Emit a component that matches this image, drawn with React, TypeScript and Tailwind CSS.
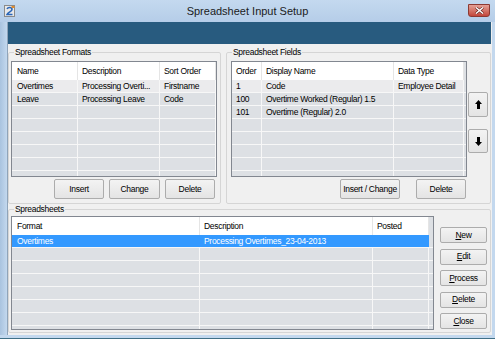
import React from "react";

type Col = { label: string; w: string; pl?: string };

function Btn({ children, className = "" }: { children: React.ReactNode; className?: string }) {
  return (
    <button className={`flex shrink-0 items-center justify-center rounded-[2px] border border-[#acacac] bg-linear-to-b from-[#f3f3f3] to-[#e4e4e4] text-black ${className}`}>
      {children}
    </button>
  );
}

function Acc({ k, rest }: { k: string; rest: string }) {
  return (
    <span>
      <span className="underline underline-offset-[1px]">{k}</span>
      {rest}
    </span>
  );
}

function ListView({
  cols,
  rows,
  filler = "",
  body = 8,
  light = -1,
  selected = -1,
  className = "",
}: {
  cols: Col[];
  rows: string[][];
  filler?: string;
  body?: number;
  light?: number;
  selected?: number;
  className?: string;
}) {
  return (
    <div className={`flex shrink-0 flex-col overflow-hidden border border-[#828790] bg-[#dde0e4] ${className}`}>
      <div className="flex h-[18px] shrink-0">
        {cols.map((c, i) => (
          <div
            key={i}
            className={`flex shrink-0 items-center border-r border-[#e5e5e5] bg-white ${c.w} ${c.pl ?? "pl-[4px]"}`}
          >
            {c.label}
          </div>
        ))}
        {filler && <div className={`shrink-0 ${filler}`} />}
      </div>
      {Array.from({ length: body }).map((_, r) => {
        const row = rows[r] ?? [];
        const sel = r === selected;
        const bg = sel ? "bg-[#3399ff] text-white" : r === light ? "bg-[#ebebed]" : "bg-[#dde0e4]";
        return (
          <div key={r} className="flex h-[13px] shrink-0 border-b border-[#f7f7f7]">
            {cols.map((c, i) => (
              <div
                key={i}
                className={`flex shrink-0 items-center overflow-hidden whitespace-nowrap border-r ${sel ? "border-[#3399ff]" : "border-[#f7f7f7]"} ${bg} ${c.w} ${c.pl ?? "pl-[4px]"}`}
              >
                {row[i] ?? ""}
              </div>
            ))}
            {filler && <div className={`shrink-0 ${filler}`} />}
          </div>
        );
      })}
    </div>
  );
}

function Arrow({ down = false }: { down?: boolean }) {
  return (
    <svg width="7" height="9" viewBox="0 0 7 9" className={down ? "rotate-180" : ""}>
      <path d="M3.5 0 L7 4 L5 4 L5 9 L2 9 L2 4 L0 4 Z" fill="#000" />
    </svg>
  );
}

export default function App() {
  return (
    <div className="flex h-[339px] w-[495px] flex-col overflow-hidden bg-[#b9d1ea] font-['Liberation_Sans',Arial,sans-serif] text-[8.5px] leading-[11px] tracking-[-0.3px] text-black">
      {/* title bar */}
      <div className="relative flex h-[22px] shrink-0 items-center justify-center bg-linear-to-b from-[#c4d9ef] to-[#b5cde8]">
        <svg width="12" height="12" viewBox="0 0 12 12" className="absolute left-[4px] top-[5px]">
          <rect x="0.5" y="0.5" width="10" height="11" fill="#e8e8e8" stroke="#8a8a8a" />
          <path d="M3 4 C4 2 8 2 8 4.5 C8 6.5 4 7 3 9.5 L8.5 9.5" fill="none" stroke="#2a66b8" strokeWidth="1.6" />
          <rect x="7.5" y="1" width="3" height="2" fill="#e08a2c" />
        </svg>
        <span className="text-[11px] tracking-normal text-[#1b1b1b]">Spreadsheet Input Setup</span>
        <div className="absolute left-[468px] top-[4px] flex h-[13px] w-[22px] items-center justify-center rounded-b-[3px] border border-[#8c3a33] bg-linear-to-b from-[#e3a096] to-[#c2453a]">
          <svg width="9" height="7" viewBox="0 0 9 7">
            <path d="M1 0.5 L8 6.5 M8 0.5 L1 6.5" stroke="#5a1a14" strokeWidth="2.6" />
            <path d="M1 0.5 L8 6.5 M8 0.5 L1 6.5" stroke="#fff" strokeWidth="1.5" />
          </svg>
        </div>
      </div>

      <div className="flex min-h-0 flex-1">
        {/* left frame */}
        <div className="w-[8px] shrink-0 border-r border-[#8fa4ba] bg-linear-to-r from-[#a9c3df] to-[#c3d8ee]" />
        <div className="flex h-[313px] w-[484px] shrink-0 flex-col bg-[#f0f0f0] pr-[1px]">
          <div className="h-[22px] shrink-0 bg-[#285b7f]" />

          {/* top row */}
          <div className="mt-[3px] flex gap-[5px]">
            <fieldset className="flex w-[213px] shrink-0 flex-col rounded-[2px] border border-[#d5d5d5] pb-[4px] pl-[2px] pr-[3px] pt-[3px]">
              <legend className="ml-[3px] px-[1px] leading-[11px]">Spreadsheet Formats</legend>
              <ListView
                className="h-[116px] w-[206px]"
                light={0}
                cols={[
                  { label: "Name", w: "w-[66px]", pl: "pl-[5px]" },
                  { label: "Description", w: "w-[82px]" },
                  { label: "Sort Order", w: "w-[56px]" },
                ]}
                rows={[
                  ["Overtimes", "Processing Overti...", "Firstname"],
                  ["Leave", "Processing Leave", "Code"],
                ]}
              />
              <div className="mr-[2px] mt-[2px] flex justify-end gap-[5px]">
                <Btn className="h-[20px] w-[50px]">Insert</Btn>
                <Btn className="h-[20px] w-[51px]">Change</Btn>
                <Btn className="h-[20px] w-[50px]">Delete</Btn>
              </div>
            </fieldset>

            <fieldset className="flex w-[265px] shrink-0 flex-col rounded-[2px] border border-[#d5d5d5] pb-[4px] pl-[4px] pr-[2px] pt-[3px]">
              <legend className="ml-[1px] px-[1px] leading-[11px]">Spreadsheet Fields</legend>
              <div className="flex gap-[1px]">
                <ListView
                  className="h-[116px] w-[236px]"
                  light={0}
                  filler="w-[2px]"
                  cols={[
                    { label: "Order", w: "w-[30px]", pl: "pl-[4px]" },
                    { label: "Display Name", w: "w-[132px]" },
                    { label: "Data Type", w: "w-[70px]" },
                  ]}
                  rows={[
                    ["1", "Code", "Employee Detail"],
                    ["100", "Overtime Worked (Regular) 1.5", ""],
                    ["101", "Overtime (Regular) 2.0", ""],
                  ]}
                />
                <div className="flex flex-col gap-[12px] pt-[31px]">
                  <Btn className="h-[25px] w-[20px]">
                    <Arrow />
                  </Btn>
                  <Btn className="h-[24px] w-[20px]">
                    <Arrow down />
                  </Btn>
                </div>
              </div>
              <div className="mr-[22px] mt-[2px] flex justify-end gap-[16px]">
                <Btn className="h-[20px] w-[60px]">Insert / Change</Btn>
                <Btn className="h-[20px] w-[50px]">Delete</Btn>
              </div>
            </fieldset>
          </div>

          {/* spreadsheets */}
          <fieldset className="flex w-[483px] shrink-0 rounded-[2px] border border-[#d5d5d5] pb-[2px] pl-[2px] pr-[3px] pt-[1px]">
            <legend className="ml-[3px] px-[1px] leading-[11px]">Spreadsheets</legend>
            <ListView
              className="h-[114px] w-[423px]"
              selected={0}
              filler="w-[4px]"
              cols={[
                { label: "Format", w: "w-[188px]", pl: "pl-[5px]" },
                { label: "Description", w: "w-[173px]" },
                { label: "Posted", w: "w-[56px]" },
              ]}
              rows={[["Overtimes", "Processing Overtimes_23-04-2013", ""]]}
            />
            <div className="ml-[6px] flex flex-col gap-[5.5px] pt-[11px]">
              <Btn className="h-[16px] w-[47px]"><Acc k="N" rest="ew" /></Btn>
              <Btn className="h-[16px] w-[47px]"><Acc k="E" rest="dit" /></Btn>
              <Btn className="h-[16px] w-[47px]"><Acc k="P" rest="rocess" /></Btn>
              <Btn className="h-[16px] w-[47px]"><Acc k="D" rest="elete" /></Btn>
              <Btn className="h-[16px] w-[47px]"><Acc k="C" rest="lose" /></Btn>
            </div>
          </fieldset>
        </div>
        {/* right frame */}
        <div className="flex-1 bg-[#c3d8ee]" />
      </div>
      <div className="h-[4px] shrink-0 border-b border-[#3f6f86] bg-[#c3d8ee]" />
    </div>
  );
}
